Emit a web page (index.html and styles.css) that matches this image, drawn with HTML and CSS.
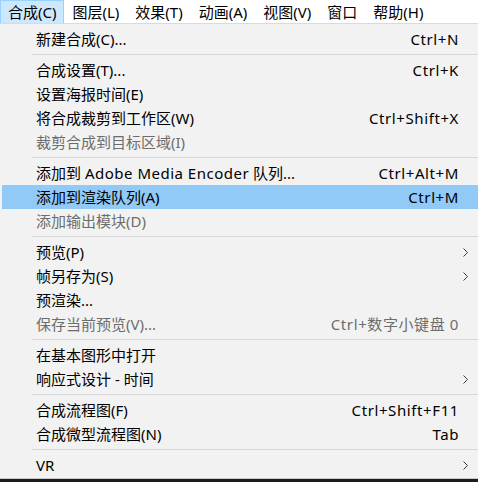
FILE: index.html
```html
<!DOCTYPE html>
<html lang="zh-CN">
<head>
<meta charset="UTF-8" />
<title>合成菜单</title>
<link rel="stylesheet" href="styles.css">
</head>
<body>

<!-- Строка меню -->
<div class="menubar">
  <span class="top active">合成(C)</span>
  <span class="top">图层(L)</span>
  <span class="top">效果(T)</span>
  <span class="top">动画(A)</span>
  <span class="top">视图(V)</span>
  <span class="top">窗口</span>
  <span class="top">帮助(H)</span>
</div>

<!-- Выпадающее меню -->
<div class="menu">
  <div class="item"><span class="label">新建合成(C)...</span><span class="key">Ctrl+N</span><span class="sub"></span></div>
  <div class="sep"></div>
  <div class="item"><span class="label">合成设置(T)...</span><span class="key">Ctrl+K</span><span class="sub"></span></div>
  <div class="item"><span class="label">设置海报时间(E)</span><span class="sub"></span></div>
  <div class="item"><span class="label">将合成裁剪到工作区(W)</span><span class="key">Ctrl+Shift+X</span><span class="sub"></span></div>
  <div class="item off"><span class="label">裁剪合成到目标区域(I)</span><span class="sub"></span></div>
  <div class="sep"></div>
  <div class="item"><span class="label">添加到 <span class="lat">Adobe Media Encoder</span> 队列...</span><span class="key">Ctrl+Alt+M</span><span class="sub"></span></div>
  <div class="item hover"><span class="label">添加到渲染队列(A)</span><span class="key">Ctrl+M</span><span class="sub"></span></div>
  <div class="item off"><span class="label">添加输出模块(D)</span><span class="sub"></span></div>
  <div class="sep"></div>
  <div class="item"><span class="label">预览(P)</span><span class="sub"><svg width="5" height="9" viewBox="0 0 5 9"><path d="M0.5 0.5 L4.5 4.5 L0.5 8.5" fill="none" stroke="#3c3c3c" stroke-width="1"/></svg></span></div>
  <div class="item"><span class="label">帧另存为(S)</span><span class="sub"><svg width="5" height="9" viewBox="0 0 5 9"><path d="M0.5 0.5 L4.5 4.5 L0.5 8.5" fill="none" stroke="#3c3c3c" stroke-width="1"/></svg></span></div>
  <div class="item"><span class="label">预渲染...</span><span class="sub"></span></div>
  <div class="item off"><span class="label">保存当前预览(V)...</span><span class="key">Ctrl+数字小键盘 0</span><span class="sub"></span></div>
  <div class="sep"></div>
  <div class="item"><span class="label">在基本图形中打开</span><span class="sub"></span></div>
  <div class="item"><span class="label">响应式设计 - 时间</span><span class="sub"><svg width="5" height="9" viewBox="0 0 5 9"><path d="M0.5 0.5 L4.5 4.5 L0.5 8.5" fill="none" stroke="#3c3c3c" stroke-width="1"/></svg></span></div>
  <div class="sep"></div>
  <div class="item"><span class="label">合成流程图(F)</span><span class="key">Ctrl+Shift+F11</span><span class="sub"></span></div>
  <div class="item"><span class="label">合成微型流程图(N)</span><span class="key">Tab</span><span class="sub"></span></div>
  <div class="sep"></div>
  <div class="item"><span class="label">VR</span><span class="sub"><svg width="5" height="9" viewBox="0 0 5 9"><path d="M0.5 0.5 L4.5 4.5 L0.5 8.5" fill="none" stroke="#3c3c3c" stroke-width="1"/></svg></span></div>
</div>

<div class="under"></div>

</body>
</html>
```

FILE: styles.css
```css
/* Общие */
body {
  margin: 0;
  background-color: #1c1c1c;
  font-family: "Noto Sans", "Noto Sans CJK SC", sans-serif;
  font-size: 15px;
  color: #000;
}

/* Строка меню */
.menubar {
  display: flex;
  height: 23px;
  background-color: #fff;
  border-bottom: 1px solid #dadada;
}

.top {
  display: flex;
  align-items: center;
  padding: 0 7px;
  line-height: 20px;
  border: 1px solid transparent;
  border-bottom: 0;
}

.top.active {
  background-color: #cce8ff;
  border-color: #99d1ff;
}

/* Выпадающее меню */
.menu {
  background-color: #f2f2f2;
  padding: 3px 0 1px 2px;
  border-bottom: 1px solid #c8c8c8;
}

.item {
  display: flex;
  align-items: center;
  height: 24px;
  padding-left: 34px;
  line-height: 20px;
  white-space: nowrap;
}

.item .label {
  flex: 1;
}

.item .lat {
  letter-spacing: 0.5px;
}

.item .key {
  text-align: right;
  letter-spacing: 0.6px;
  margin-right: -1px;
}

.item .sub {
  width: 20px;
  display: flex;
  align-items: center;
  padding-left: 5px;
  box-sizing: border-box;
}

.item.hover {
  background-color: #91c9f7;
}

.item.off {
  color: #6d6d6d;
}

/* Разделитель */
.sep {
  height: 1px;
  margin: 3px 0 3px 30px;
  background-color: #d7d7d7;
}

.under {
  height: 4px;
  background-color: #1c1c1c;
}
```
